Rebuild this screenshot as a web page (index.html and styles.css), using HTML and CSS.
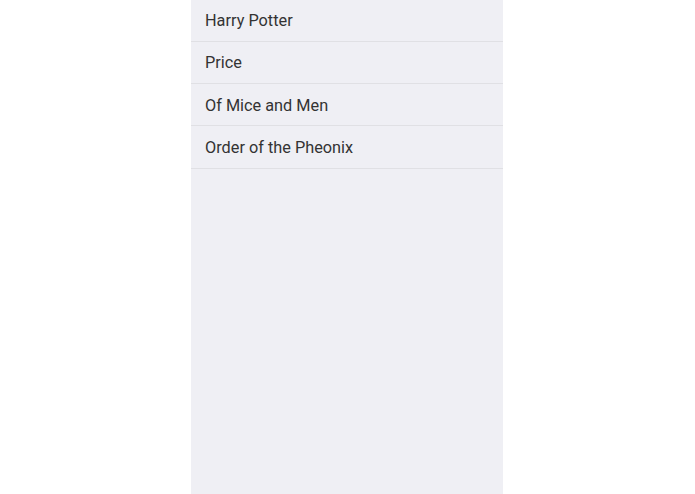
FILE: index.html
```html
<!DOCTYPE html>
<html>
<head>
<meta charset="utf-8">
<link rel="stylesheet" href="styles.css">
</head>
<body>
<div class="page">
  <div class="panel">
    <ul class="list">
      <li class="row">Harry Potter</li>
      <li class="row">Price</li>
      <li class="row">Of Mice and Men</li>
      <li class="row">Order of the Pheonix</li>
    </ul>
  </div>
</div>
</body>
</html>
```
FILE: styles.css
```css
html, body {
  margin: 0;
  padding: 0;
  background: #ffffff;
  height: 100%;
}
.page {
  display: flex;
  justify-content: flex-start;
  height: 494px;
  padding-left: 191px;
  box-sizing: border-box;
}
.panel {
  width: 312px;
  height: 494px;
  background: #efeff4;
}
.list {
  list-style: none;
  margin: 0;
  padding: 0;
}
.row {
  height: 42.3px;
  box-sizing: border-box;
  display: flex;
  align-items: center;
  padding-left: 14px;
  padding-top: 1px;
  border-bottom: 1px solid #e0e0e4;
  font-family: Roboto, "Liberation Sans", sans-serif;
  font-size: 16.3px;
  color: #333333;
}
.row:first-child {
  height: 41.8px;
}
```
